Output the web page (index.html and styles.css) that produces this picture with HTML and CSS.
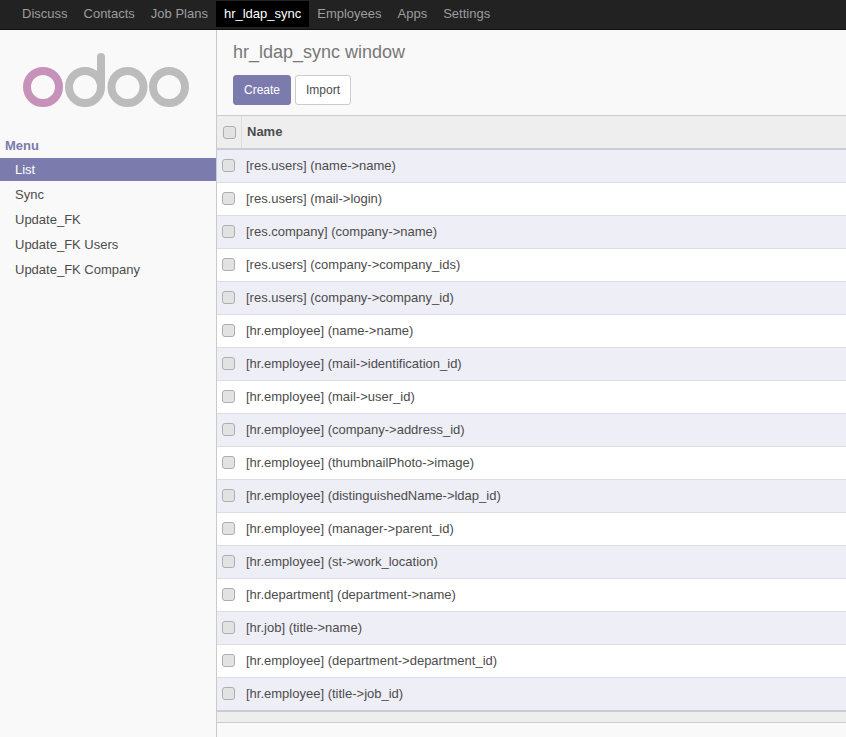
FILE: index.html
```html
<!DOCTYPE html>
<html lang="en">
<head>
<meta charset="utf-8">
<title>hr_ldap_sync window</title>
<link rel="stylesheet" href="styles.css">
</head>
<body>
<nav class="topbar">
  <a class="top-link">Discuss</a>
  <a class="top-link">Contacts</a>
  <a class="top-link">Job Plans</a>
  <a class="top-link active">hr_ldap_sync</a>
  <a class="top-link">Employees</a>
  <a class="top-link">Apps</a>
  <a class="top-link">Settings</a>
</nav>
<div class="main">
  <aside class="sidebar">
    <div class="logo-wrap">
      <svg class="logo" width="170" height="58" viewBox="0 0 170 58">
        <circle cx="20" cy="34" r="16" fill="none" stroke="#c792b9" stroke-width="8"/>
        <circle cx="62" cy="34" r="16" fill="none" stroke="#bbbcbb" stroke-width="8"/>
        <path d="M78 34V4" fill="none" stroke="#bbbcbb" stroke-width="8" stroke-linecap="round"/>
        <circle cx="104.500" cy="34" r="16" fill="none" stroke="#bbbcbb" stroke-width="8"/>
        <circle cx="146" cy="34" r="16" fill="none" stroke="#bbbcbb" stroke-width="8"/>
      </svg>
    </div>
    <div class="menu-title">Menu</div>
    <ul class="menu">
      <li class="menu-item current">List</li>
      <li class="menu-item">Sync</li>
      <li class="menu-item">Update_FK</li>
      <li class="menu-item">Update_FK Users</li>
      <li class="menu-item">Update_FK Company</li>
    </ul>
  </aside>
  <section class="content">
    <header class="control">
      <h1 class="title">hr_ldap_sync window</h1>
      <div class="buttons">
        <button class="btn primary">Create</button>
        <button class="btn">Import</button>
      </div>
    </header>
    <div class="thead">
      <div class="head-check"><span class="check"></span></div>
      <div class="head-name">Name</div>
    </div>
    <div class="row odd"><span class="check"></span><span class="cell">[res.users] (name-&gt;name)</span></div>
    <div class="row"><span class="check"></span><span class="cell">[res.users] (mail-&gt;login)</span></div>
    <div class="row odd"><span class="check"></span><span class="cell">[res.company] (company-&gt;name)</span></div>
    <div class="row"><span class="check"></span><span class="cell">[res.users] (company-&gt;company_ids)</span></div>
    <div class="row odd"><span class="check"></span><span class="cell">[res.users] (company-&gt;company_id)</span></div>
    <div class="row"><span class="check"></span><span class="cell">[hr.employee] (name-&gt;name)</span></div>
    <div class="row odd"><span class="check"></span><span class="cell">[hr.employee] (mail-&gt;identification_id)</span></div>
    <div class="row"><span class="check"></span><span class="cell">[hr.employee] (mail-&gt;user_id)</span></div>
    <div class="row odd"><span class="check"></span><span class="cell">[hr.employee] (company-&gt;address_id)</span></div>
    <div class="row"><span class="check"></span><span class="cell">[hr.employee] (thumbnailPhoto-&gt;image)</span></div>
    <div class="row odd"><span class="check"></span><span class="cell">[hr.employee] (distinguishedName-&gt;ldap_id)</span></div>
    <div class="row"><span class="check"></span><span class="cell">[hr.employee] (manager-&gt;parent_id)</span></div>
    <div class="row odd"><span class="check"></span><span class="cell">[hr.employee] (st-&gt;work_location)</span></div>
    <div class="row"><span class="check"></span><span class="cell">[hr.department] (department-&gt;name)</span></div>
    <div class="row odd"><span class="check"></span><span class="cell">[hr.job] (title-&gt;name)</span></div>
    <div class="row"><span class="check"></span><span class="cell">[hr.employee] (department-&gt;department_id)</span></div>
    <div class="row odd last"><span class="check"></span><span class="cell">[hr.employee] (title-&gt;job_id)</span></div>
    <div class="tfoot"></div>
  </section>
</div>
</body>
</html>
```
FILE: styles.css
```css
* { box-sizing: border-box; }
html, body { height: 100%; }
body {
  margin: 0;
  height: 737px;
  overflow: hidden;
  display: flex;
  flex-direction: column;
  background: #f9f9f9;
  color: #4c4c4c;
  font-family: "Liberation Sans", Arial, sans-serif;
  font-size: 13px;
}
.topbar {
  flex: none;
  height: 30px;
  display: flex;
  padding: 1px 0 0 14px;
  background: #222222;
  border-bottom: 1px solid #111111;
}
.top-link {
  height: 26px;
  padding: 0 8px;
  line-height: 25px;
  color: #9d9d9d;
  font-size: 13px;
}
.top-link.active { background: #000; color: #fff; }
.main { flex: 1; display: flex; min-height: 0; }
.sidebar {
  flex: none;
  width: 217px;
  background: #f9f9f9;
  border-right: 1px solid #cacaca;
}
.logo-wrap { padding: 23px 0 0 23px; height: 99px; }
.logo { display: block; }
.menu-title {
  padding: 9px 0 0 5px;
  height: 29px;
  color: #7c7bad;
  font-weight: bold;
  font-size: 13px;
  line-height: 15px;
}
.menu { list-style: none; margin: 0; padding: 0; }
.menu-item {
  height: 25px;
  padding-left: 15px;
  line-height: 25px;
  color: #4c4c4c;
}
.menu-item.current { height: 23px; margin-bottom: 1px; line-height: 23px; background: #7c7bad; color: #fff; }
.content { flex: 1; min-width: 0; }
.control { height: 85px; padding: 10px 16px 0; }
.title {
  margin: 0;
  color: #777777;
  font-weight: normal;
  font-size: 18px;
  line-height: 24px;
}
.buttons { display: flex; gap: 4px; margin-top: 11px; }
.btn {
  height: 30px;
  padding: 0 10px;
  border: 1px solid #cccccc;
  border-radius: 3px;
  background: #fff;
  color: #4c4c4c;
  font-family: inherit;
  font-size: 12px;
}
.btn.primary { background: #7c7bad; border-color: #7c7bad; color: #fff; }
.thead {
  height: 35px;
  display: flex;
  background: #eeeeee;
  border-top: 1px solid #cccccc;
  border-bottom: 2px solid #cccccc;
}
.head-check {
  width: 25px;
  padding-left: 1px;
  display: flex;
  align-items: center;
  justify-content: center;
  border-right: 1px solid #dddddd;
}
.head-name { padding-left: 5px; line-height: 31px; font-weight: bold; }
.check {
  flex: none;
  width: 13px;
  height: 13px;
  border: 1px solid #adadad;
  border-radius: 3px;
  background: #e2e2e2;
  box-shadow: inset 0 0 1px #f4f4f4;
}
.row {
  height: 33px;
  display: flex;
  align-items: center;
  padding: 0 0 1px 5px;
  background: #fff;
  border-bottom: 1px solid #dddddd;
}
.row.odd { background: #eeeef6; }
.row.last { height: 34px; border-bottom: 2px solid #cccccc; }
.cell { margin-left: 11px; }
.tfoot { height: 11px; background: #eeeeee; border-bottom: 1px solid #cccccc; }
```
